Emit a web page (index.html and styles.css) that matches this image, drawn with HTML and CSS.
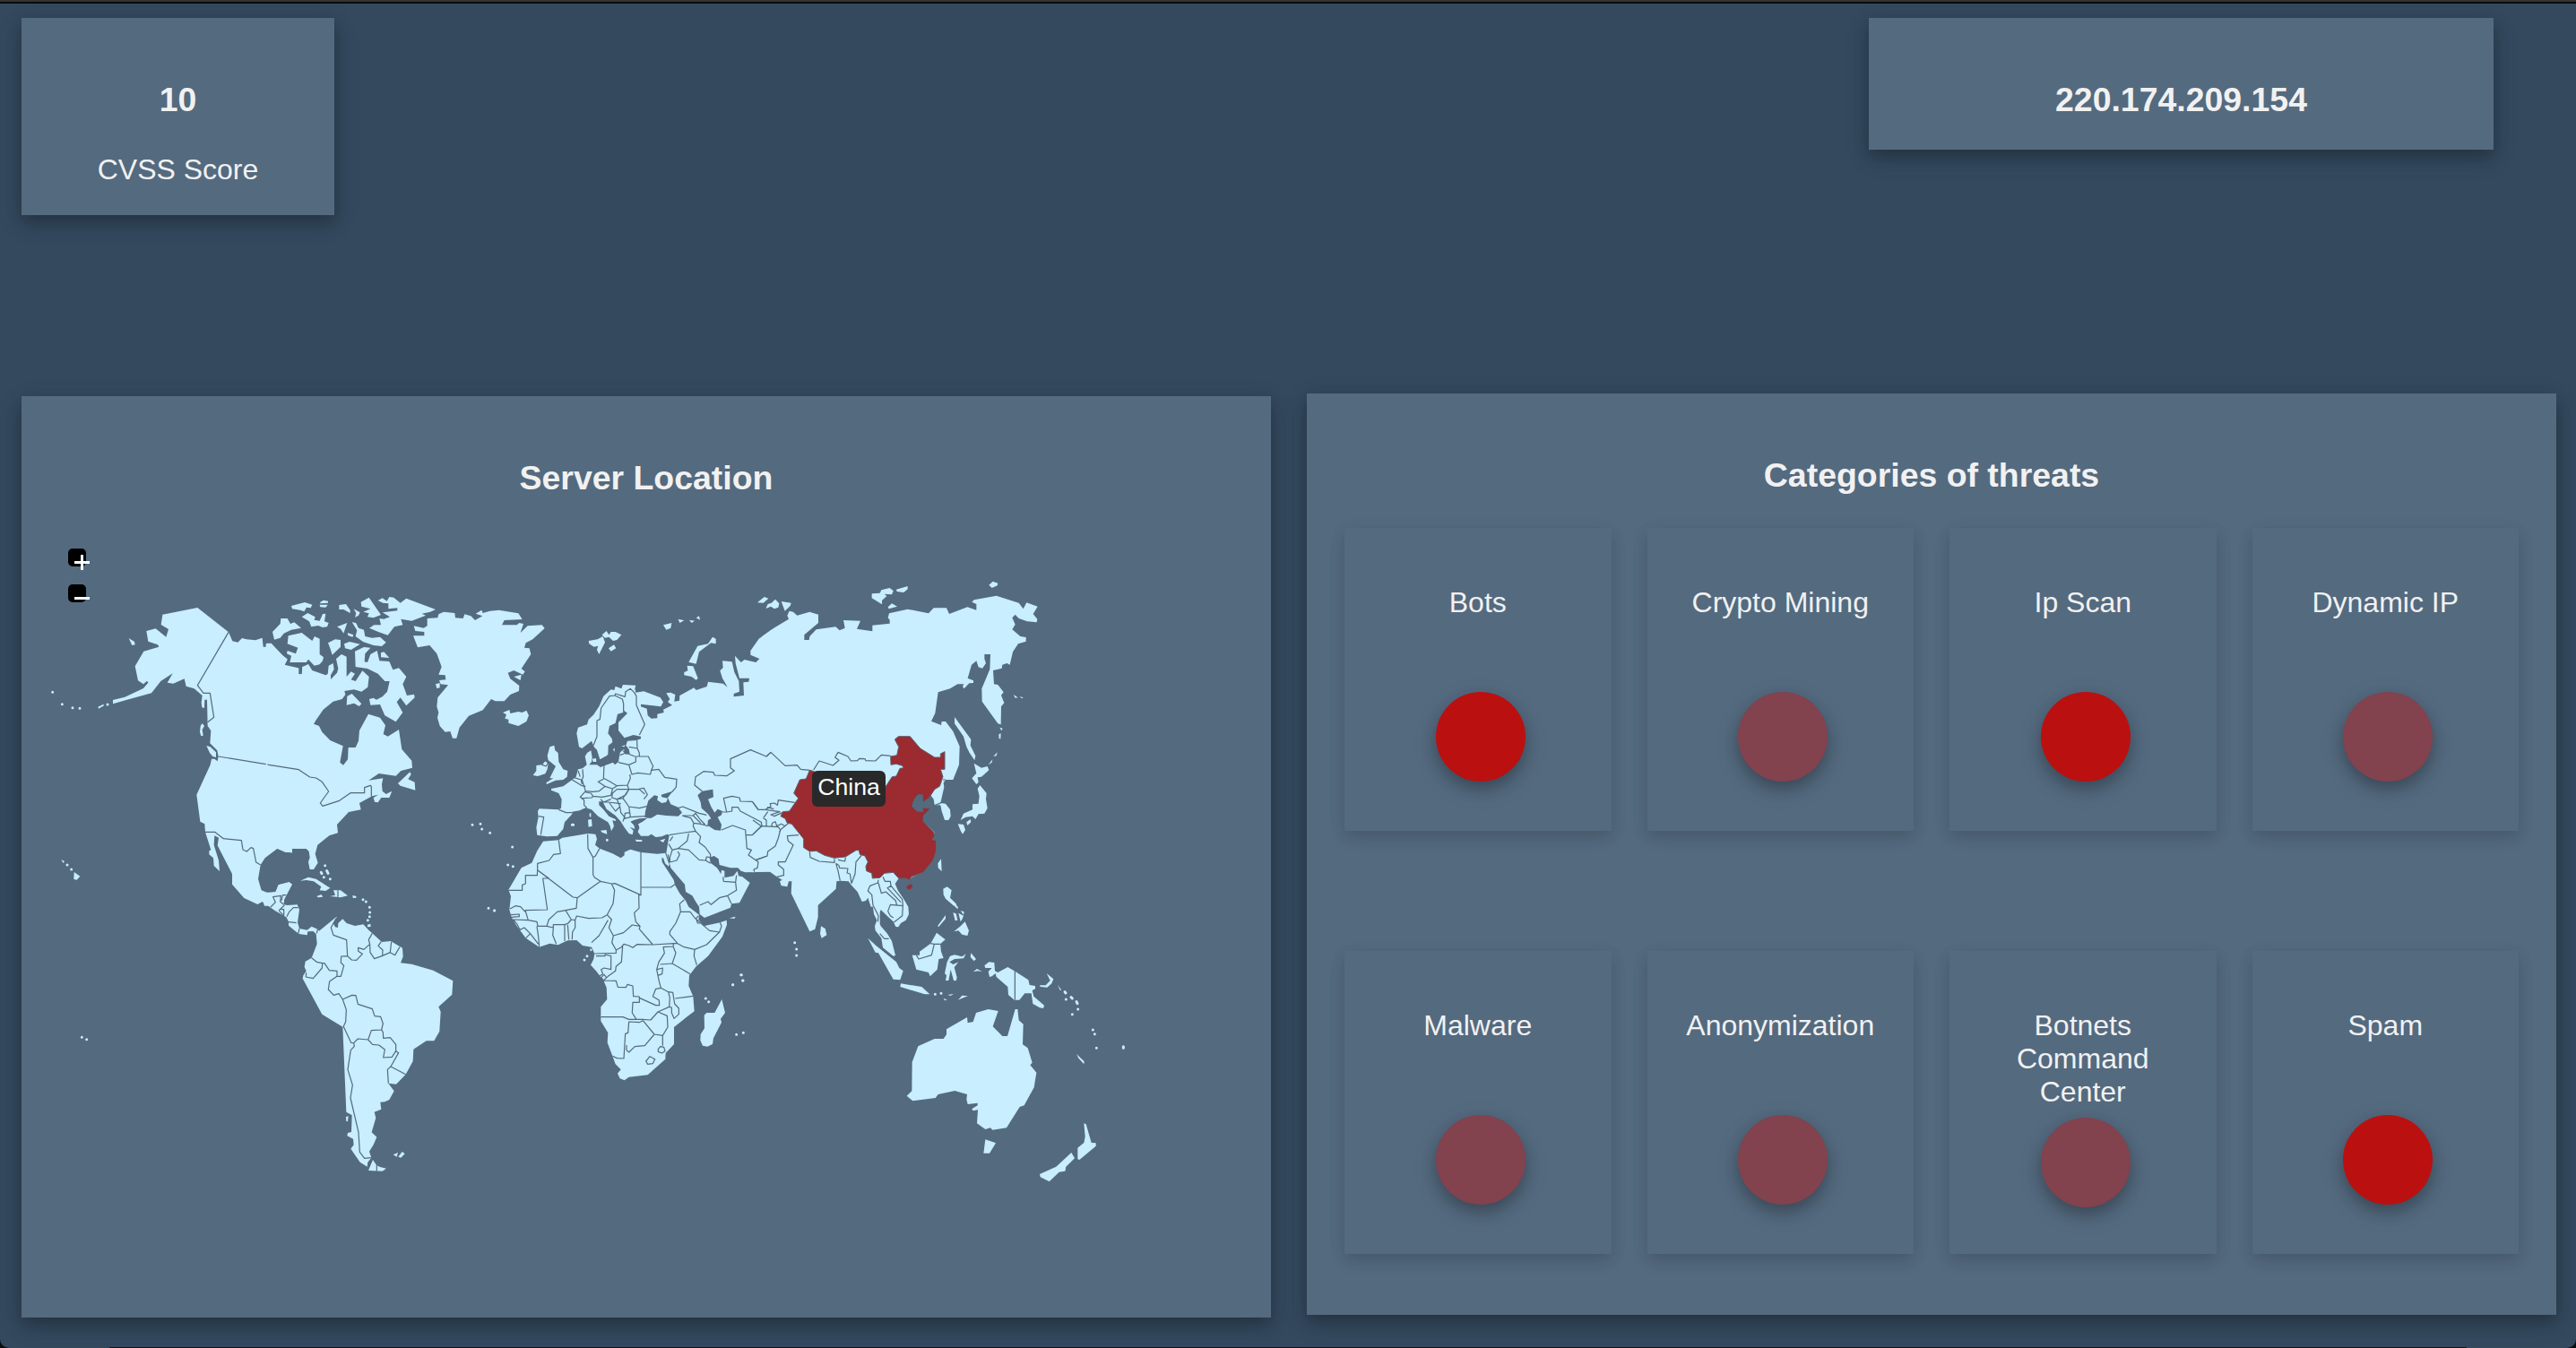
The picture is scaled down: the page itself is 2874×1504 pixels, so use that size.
FILE: index.html
```html
<!DOCTYPE html>
<html lang="en">
<head>
<meta charset="utf-8">
<title>Threat dashboard</title>
<link rel="stylesheet" href="styles.css">
</head>
<body>
<div class="page">
  <div class="window-edge"></div>
  <header class="summary">
    <section class="card score">
      <h3 class="card-title">10</h3>
      <p class="card-text">CVSS Score</p>
    </section>
    <section class="card address">
      <h3 class="card-title">220.174.209.154</h3>
    </section>
  </header>
  <main class="panels">
    <section class="card panel location">
      <h3 class="card-title">Server Location</h3>
      <div class="map">
        <svg class="world" viewBox="24 592 1394 800" width="1394" height="800">
          <!-- North America, west -->
          <g class="land" transform="translate(40 590) scale(.33333)">
            <path d="M541,264 645,346 658,376 676,380 690,366 705,370 735,373 758,365 761,395 773,395 774,383 788,383 822,422 842,436 832,458 880,467 880,487 892,487 892,462 900,460 910,500 910,1070 858,1070 858,1084 835,1082 808,1070 767,1102 752,1125 744,1172 755,1210 780,1220 804,1215 812,1192 848,1184 858,1190 832,1240 820,1262 765,1262 760,1247 742,1257 697,1236 657,1190 657,1155 608,1060 612,1034 598,1027 596,1058 612,1110 615,1146 596,1128 594,1102 580,1090 580,1078 586,1075 567,1015 565,988 550,980 538,890 584,790 588,770 598,770 608,778 611,762 607,742 583,718 586,676 575,660 573,572 565,572 564,600 556,598 554,582 557,558 530,535 503,527 497,502 460,518 440,515 458,484 418,510 387,550 300,574 258,586 258,573 298,563 360,534 376,515 372,509 360,520 342,508 332,460 361,410 412,395 408,388 376,377 370,342 401,334 436,362 444,336 419,321 424,287Z"/>
            <path d="M571,726 584,730 603,748 603,765 592,762 582,750ZM551,660 557,651 564,660 557,672 560,692 553,694 549,680ZM311,366 330,378 332,388 322,390ZM208,596 226,587 228,592 210,602ZM128,1149 148,1163 137,1175 127,1173ZM85,1107 96,1113 92,1119Z"/>
            <path class="dots" d="M56,547h0M88,587h0M123,599h0M147,601h0M240,588h0M105,1125h0M119,1140h0M154,1702h0M170,1709h0"/>
            <path class="border" d="M645,346 541,524 561,550 583,550 596,631 575,647M611,762 880,806 905,822M567,1015 599,1015 628,1037 688,1043 693,1074 706,1080 720,1067 728,1070 737,1116 752,1125"/>
          </g>
          <!-- North America, east, Arctic islands and Greenland -->
          <g class="land" transform="translate(300 640) scale(.33333)">
            <path d="M-10,234 8,234 45,272 62,288 52,305 98,316 98,337 110,337 112,313 132,303 145,324 190,340 197,336 200,308 215,300 218,320 207,340 207,354 228,332 232,318 225,285 243,270 260,278 260,345 275,328 288,335 275,355 290,360 313,325 335,345 331,380 310,395 285,388 253,393 256,405 245,420 215,428 182,455 158,490 150,503 168,510 178,530 205,558 248,577 238,632 249,641 264,622 266,582 290,582 300,560 303,525 333,470 372,482 390,508 383,537 398,545 435,522 445,588 478,626 480,650 442,660 425,677 368,669 334,692 382,685 378,705 380,728 392,738 412,728 403,750 376,750 365,766 354,764 350,750 366,740 345,745 303,768 308,790 267,798 228,840 231,868 202,877 163,908 155,938 164,968 150,990 137,990 132,965 137,950 134,930 125,921 78,921 78,934 55,932 28,920 0,940 -10,940Z"/>
            <path d="M40,150 62,150 72,168 85,163 108,182 75,188 50,200 38,215 18,221 12,195 38,168ZM65,208 110,198 145,225 153,210 170,218 170,270 183,280 180,292 170,304 152,308 132,287 125,297 70,297 75,275 60,268 62,258 90,268 97,248 62,235ZM75,108 120,96 145,104 140,115 126,113 118,127 105,122 78,118ZM172,95 183,89 198,92 198,98 172,100ZM170,104 197,104 190,113 172,112ZM110,145 130,132 155,145 152,155 170,158 180,135 190,134 186,160 200,165 195,178 180,180 165,174 142,178 135,160ZM235,105 258,102 272,122 272,132 250,120 235,120ZM284,118 305,130 300,140 288,146 292,133ZM308,95 335,80 375,138 350,148 330,145 335,133 316,128 340,118 310,110Z"/>
            <path d="M365,90 380,82 395,92 403,78 418,80 440,98 460,83 558,120 540,128 512,134 525,140 478,158 442,152 448,172 420,178 398,206 368,196 336,182 352,172 375,172 370,150 385,152 405,145 380,130 430,124 430,115 400,118 400,100 382,98ZM278,162 292,166 300,182 318,188 322,210 345,215 372,212 392,230 378,243 350,240 315,228 290,210 295,190ZM228,178 262,165 255,185 250,200 240,185ZM263,198 283,205 280,212 265,207ZM198,232 222,220 240,222 240,245 212,272 205,250ZM252,235 270,228 305,236 275,255 255,250Z"/>
            <path d="M288,260 318,246 340,248 322,268 320,295 330,297 340,270 362,258 370,292 403,294 415,322 435,316 460,345 448,370 462,408 486,404 488,415 460,442 440,415 428,430 448,465 425,496 388,475 372,438 340,440 336,420 350,416 360,422 380,412 396,395 404,360 388,360 365,335 330,318 290,312ZM375,265 385,262 403,282 375,280ZM262,410 278,402 310,436 302,444 285,434 260,440ZM432,702 472,664 476,672 466,688 488,698 490,725 440,710ZM558,370 572,366 572,382 562,384Z"/>
            <path d="M530,150 565,148 568,136 585,128 622,132 624,148 650,150 655,136 676,142 690,156 715,142 692,134 712,122 716,132 740,125 770,122 835,133 848,153 788,156 780,172 830,172 838,165 852,168 842,198 866,175 914,172 923,183 883,220 860,232 855,248 872,250 877,270 845,318 857,328 850,338 820,324 800,332 808,352 838,375 837,393 808,405 788,427 758,427 744,420 716,457 669,476 638,515 628,551 615,551 607,528 590,530 572,510 564,482 568,465 562,445 565,415 600,373 575,370 570,357 592,355 590,340 568,338 578,312 562,268 538,240 498,247 483,208 520,208 520,195 490,192 485,175 518,182 530,175ZM820,345 845,338 842,357ZM783,465 805,456 808,468 835,462 848,465 862,458 870,475 862,495 835,510 802,500 802,488 790,485 795,472Z"/>
            <path d="M105,1028 132,1016 158,1022 205,1052 190,1062 170,1060 175,1048 150,1030 125,1026ZM160,1080 175,1074 181,1082 165,1084ZM205,1080 222,1076 216,1060 240,1060 264,1078 240,1084 228,1082ZM280,1077 293,1080 291,1086 281,1085Z"/>
            <path class="dots" d="M188,977h0M175,1000l2,4M194,995l4,8M184,1016h0M205,1022h0M681,841h0M708,838h0M713,855h0M740,868h0M815,915h0M800,975h0M817,980h0M735,1120h0M755,1128h0"/>
            <path class="border" d="M-5,639 0,640 100,656 137,681 158,684 178,697 200,729 172,768 180,778 236,760 273,734 320,734 320,716 340,709 343,712 343,746M231,1060V1082"/>
          </g>
          <!-- Central and South America -->
          <g class="land" transform="translate(300 980) scale(.33333)">
            <path d="M-20,48 22,46 32,22 68,12 77,20 52,62 50,88 62,90 95,88 102,105 96,148 102,168 128,173 143,161 163,170 168,176 225,130 228,128 215,150 222,163 231,165 232,150 247,136 260,150 288,159 316,154 334,173 346,184 378,213 408,210 438,228 447,233 449,262 441,283 478,287 550,308 616,343 613,389 568,430 575,446 571,512 553,544 527,544 484,572 482,612 458,656 426,689 400,686 419,712 403,741 388,748 373,749 376,773 353,782 358,802 344,850 361,866 350,892 336,914 343,935 331,950 329,965 305,950 274,905 284,892 282,872 262,862 264,852 276,849 278,793 259,782 247,497 178,455 113,335 115,325 120,318 125,310 119,297 122,278 143,266 161,220 158,186 148,177 130,178 128,190 100,186 66,158 66,145 58,130 20,108 -5,90 -20,80Z"/>
            <path d="M348,942 360,960 372,966 393,971 380,980 333,978ZM258,798 266,796 264,814 259,813ZM416,925 432,918 428,932ZM433,932 446,915 455,922 442,935ZM330,155 340,152 341,162 330,163Z"/>
            <path class="dots" d="M315,71h0M325,78h0M337,97h0M338,114h0M337,128h0M331,140h0"/>
            <path class="border" d="M225,134 208,165 216,190 260,206 263,260 277,273 293,274 313,253 299,244 299,232 318,238 338,220M346,184 334,205 338,222 339,248 353,269 380,259 381,240 366,226 376,212M380,259 406,248 410,212M406,248 422,257 438,230M263,260 242,261 241,282 251,292 241,328 228,328 228,310 202,308 186,284 179,284 160,280 143,266M179,284 178,300 148,335 124,330 125,316M228,328 203,345 199,372 217,391 234,386 247,405 259,440 257,480 249,497M247,405 278,391 291,392 298,421 346,437 354,461 374,463 382,486 377,507 343,509 332,540 298,537 284,551 275,550 249,494M377,507 382,515 383,535 406,533 425,556 425,578 412,598 383,600 388,573 368,558 347,556 332,540M425,578 434,584 408,630 397,640 400,686M408,630 458,656M284,551 286,562 274,575 264,640 280,692 273,735 300,850 304,916 320,937 343,935M361,960V980M6,96 22,80 14,62 40,58 38,78 50,88M42,75 46,56 58,56M33,108 52,90M33,108 50,124V104L40,104M60,128 68,112 82,98 98,98M66,146 92,149M102,168 98,186M163,170 160,184"/>
          </g>
          <!-- Africa -->
          <g class="land" transform="translate(550 900) scale(.33333)">
            <path d="M168,116 220,112 232,104 318,90 343,92 348,108 342,128 357,140 400,157 428,172 440,163 440,152 460,143 495,153 550,158 578,155 592,185 588,200 576,190 570,172 565,172 566,185 590,222 605,245 609,262 625,290 645,315 655,335 690,362 688,378 705,400 760,388 782,380 783,395 768,435 720,500 680,535 657,565 655,600 670,635 674,685 650,703 606,738 606,795 578,825 577,845 518,898 455,905 440,916 425,910 417,893 428,880 410,862 400,835 383,790 385,757 361,718 361,670 382,645 380,605 370,582 345,550 327,530 337,510 340,492 330,470 300,465 280,447 250,448 218,463 190,458 155,470 110,440 80,400 62,370 55,345 60,300 52,278 95,205 130,188 148,148Z"/>
            <path d="M766,645 777,690 762,710 765,722 738,775 735,795 718,803 702,800 694,782 695,762 708,742 707,698 715,690 742,690ZM791,373 812,368 808,375ZM326,475 332,477 330,484 325,483Z"/>
            <path class="dots" d="M5,348h0M315,500h0M306,513h0M712,642h0M722,653h0M803,596h0M830,563h0M836,582h0M815,763h0M838,757h0"/>
            <path class="border" d="M220,112 226,157 203,160 188,180 149,190 149,212 268,303 282,305 360,250 340,237 335,228 335,170 318,140 317,92M335,170 343,165 357,140M149,212 148,230 109,230 109,258 98,262 98,280 52,280M149,212 187,240 167,240 182,345 108,347 118,380 67,378M57,342 75,332 92,335 108,352M60,362 88,360 88,368 60,370M282,305 279,340 243,347 215,352 187,378 180,400 150,400 147,385 118,380M243,347 262,378 275,380 280,366 320,374 365,372 382,362 402,325 407,280 397,258 360,250M397,258 408,257 495,296 495,153M497,270 595,270 609,260M495,296 488,295 489,340 473,355 478,385 492,400 490,410 535,462 605,458M492,400 466,396 437,422 403,432 388,405 397,378 382,362M385,380 355,432 330,455M403,432 398,455 412,480 430,470 438,460 455,465 468,472 482,461 535,462M180,400 202,405 200,430 212,460M202,405V395H240V450M240,395 252,390 262,378M250,395 254,445M265,445 266,420 275,405 275,380M147,400 152,435 155,470M80,392 90,412 105,405 125,425 152,460M125,425 110,440M67,378 80,392M340,492 412,490 412,480M345,500H375V495L395,500V545L372,540 362,545 368,560 355,568M434,466 430,520 412,535 410,550 385,568 370,582 362,572 372,562 380,572M370,582 412,583 418,604 445,605 450,595 468,600 470,635 490,636 490,655 468,655 466,690 480,712M490,640 545,665 557,665 556,648 535,635 545,610 562,607 587,620M605,458 603,468 570,470 574,490 555,520 548,545 555,580 562,607M603,468 612,490 600,525 560,528M550,545 568,540 566,560 552,565M600,525 660,560M605,458 618,458 640,470 675,478 673,500 682,530M675,478 715,462 758,420 725,415 690,385 675,372 660,352 628,352 612,390 592,418 592,428 618,458M628,352 625,325 640,312M688,365 680,375 685,390 695,390M758,420 765,400 760,388M610,642 670,634M587,620 602,622 608,660 622,675 622,695 606,709 598,690 598,672 590,670M587,620 592,640 590,670 552,687 528,714 500,712 455,712 435,704 361,704M552,687 583,700 585,738 568,766 540,762 502,716 490,722 455,720 452,757 443,760 438,843 415,842 400,835M540,762 508,800 475,803 455,822 447,815 447,798M568,766V800M553,812 560,803 572,805 576,818 565,825 553,820ZM512,852 525,836 542,845 535,860 518,862ZM578,155 590,190"/>
          </g>
          <!-- Europe, western Russia and the Middle East -->
          <g class="land" transform="translate(560 640) scale(.33333)">
            <path d="M905,186 860,218 832,258 832,272 862,285 850,297 812,288 800,297 780,275 782,300 795,350 828,350 826,362 808,364 810,408 776,412 776,402 795,395 793,360 778,330 770,295 738,292 740,315 730,325 738,350 755,380 740,368 690,362 686,378 650,390 643,382 595,408 594,425 577,428 580,405 565,398 550,400 562,420 555,430 570,440 540,455 542,465 520,470 520,484 500,485 488,475 485,452 465,445 465,437 532,445 540,430 530,415 475,394 448,398 445,385 448,374 405,372 400,385 380,377 376,390 365,388 340,410 325,445 306,473 290,488 285,505 255,515 250,535 258,580 268,585 300,560 308,580 318,590 328,622 350,610 355,605 356,575 370,565 368,552 355,535 360,510 380,500 387,470 405,465 408,458 420,467 390,498 390,525 410,550 440,540 465,545 465,553 450,558 420,560 415,575 425,588 428,602 415,605 402,592 395,600 390,630 378,640 372,632 345,642 330,648 318,640 292,640 300,630 302,615 298,592 285,600 278,612 284,640 270,652 255,655 248,680 235,690 205,712 165,720 165,725 190,735 200,755 198,785 190,790 125,787 120,795 122,815 115,850 118,875 150,880 185,878 205,855 210,832 235,805 235,797 260,793 280,784 300,790 322,812 355,832 362,845 366,862 375,845 370,826 382,828 380,822 358,812 340,790 325,775 325,762 338,765 350,788 380,810 398,830 410,850 425,870 437,874 440,860 428,848 445,855 442,842 430,830 442,825 460,820 487,818 470,830 455,838 460,850 455,865 465,878 490,878 500,872 515,882 535,880 553,872 560,875 555,905 550,935 560,965 565,985 590,1015 612,1040 615,1065 637,1078 650,1100 660,1115 662,1140 678,1152 765,1118 768,1105 795,1102 830,1035 805,1015 792,1012 788,995 775,1012 745,1018 745,995 735,992 733,1005 720,985 698,968 695,950 710,945 725,955 728,975 765,985 790,985 800,995 815,1000 865,998 905,998Z"/>
            <path d="M152,610 160,580 175,575 178,592 188,600 190,630 205,655 220,660 218,680 205,690 180,692 150,705 148,700 172,685 160,685 175,655 180,645 165,632 155,625ZM104,675 115,660 115,642 135,640 145,628 155,635 152,655 145,670 120,678ZM288,824 300,822 302,845 290,848ZM293,803 298,800 298,815 293,813ZM330,860 350,858 352,872 335,866ZM446,890 470,892 468,897 450,897ZM528,893 547,887 540,900ZM302,620 315,618 316,630 305,630ZM372,588 378,584 376,597ZM400,578 412,574 410,580ZM403,592 409,588 409,594Z"/>
            <path d="M290,225 320,220 338,210 345,230 325,270 318,255 322,242 308,245 292,235ZM335,205 350,192 358,205 365,195 380,195 400,205 385,222 372,225 358,212 345,215ZM357,250 375,238 382,250 365,260ZM540,172 568,165 565,182 550,188ZM590,152 610,157 595,165ZM627,155 645,158 635,165ZM650,148 660,142 663,155ZM705,212 716,218 716,235 700,232 660,262 650,302 625,296 655,242 690,235ZM620,308 640,310 656,350 650,356 635,345 610,340 610,330 622,325Z"/>
            <path class="dots" d="M235,841l4,0M352,892h0"/>
            <path class="sea" d="M478,815 480,795 490,760 510,742 522,745 520,758 535,768 550,765 555,752 535,748 533,740 572,728 555,750 565,772 590,782 603,800 590,812 550,810 520,806 500,818 488,818ZM655,742 670,728 706,722 708,748 690,755 700,780 712,800 722,788 738,795 735,808 722,815 735,840 732,860 712,858 688,842 690,825 700,820 690,805 668,785 665,765ZM440,828 458,826 484,820 470,830 456,838 460,855 448,848Z"/>
          </g>
          <!-- Northern and eastern Asia -->
          <g class="land" transform="translate(840 640) scale(.33333)">
            <path d="M30,211 70,182 120,152 115,140 122,125 135,128 148,140 190,128 219,137 219,165 172,205 172,222 188,222 190,210 212,187 277,178 290,190 308,182 303,156 360,158 348,185 400,193 400,173 458,167 458,155 452,148 456,133 518,119 588,133 605,115 648,115 657,135 718,112 748,122 748,102 733,95 740,88 815,74 890,98 905,118 916,97 953,110 938,135 952,152 950,163 918,160 890,150 878,137 868,148 878,170 868,187 895,210 914,213 914,227 888,235 870,262 860,305 850,300 835,305 833,317 804,324 807,370 820,372 839,397 831,407 841,433 831,445 830,505 820,502 767,428 766,385 793,320 795,270 775,270 775,285 780,300 768,317 755,313 748,292 732,305 719,350 738,358 738,366 724,367 707,385 702,378 706,370 685,370 660,385 620,397 610,467 597,494 630,507 632,495 645,495 670,528 692,578 690,640 670,690 645,690 638,700 640,715 632,750 628,768 645,770 660,790 662,812 655,825 642,825 632,795 628,775 608,775 605,755 595,742 608,722 590,700 500,700 500,990 30,995Z"/>
            <path d="M675,480 730,555 728,575 745,610 742,625 725,600 715,580 705,545 675,502ZM740,635 765,650 785,645 790,658 765,680 752,682 755,698 748,705 733,685 748,668ZM760,708 782,735 780,755 785,785 775,803 755,805 745,822 735,812 712,815 695,825 705,803 735,790 735,772 755,770 758,745 752,720ZM686,838 705,840 711,858 702,872 695,860ZM715,832 728,822 730,832 718,843ZM826,515 836,518 832,526ZM823,538 830,535 829,553 824,553ZM805,612 818,598 815,610ZM788,640 802,622 800,632ZM872,405 887,415 878,416ZM893,411 905,415 900,418ZM398,67 425,65 430,55 458,48 470,58 465,70 440,68 448,75 432,90 432,103 398,82ZM480,53 518,42 518,52 505,63 482,60ZM452,112 465,100 483,110 455,118ZM790,38 803,26 820,32 818,40 800,48ZM15,97 38,78 52,83 35,98ZM43,117 50,102 62,98 75,86 88,100 85,113 72,118 60,110ZM95,93 128,98 125,108 107,125ZM619,970 630,955 632,997 620,985Z"/>
          </g>
          <!-- South and south-east Asia -->
          <g class="land" transform="translate(800 820) scale(.33333)">
            <path d="M100,458V300H700L727,325 725,342 720,350 733,353 733,390 723,420 690,458 650,478 640,488 636,478 608,480 596,498 605,520 625,550 640,575 642,600 632,620 615,630 607,643 598,642 590,625 572,608 548,585 545,595 545,632 548,640 570,665 585,690 597,738 590,740 555,712 550,680 530,655 528,640 535,620 525,600 522,575 515,575 505,545 498,555 485,558 470,525 450,503 440,490 412,488 400,490 398,515 338,570 338,610 328,650 310,658 248,530 250,490 240,490 235,508 215,505 210,490 218,485 200,475 175,457 120,460Z"/>
            <path d="M757,515 770,508 785,520 780,545 800,565 805,580 790,570 765,548 758,535ZM738,640 765,603 765,615 742,642ZM790,595 800,598 805,620 797,622ZM808,596 825,605 820,618 815,625ZM815,588 827,592 825,602ZM793,658 815,640 830,625 843,655 838,672 820,668 808,655ZM797,576 806,573 806,583ZM348,640 362,648 367,670 350,680 345,665Z"/>
            <path class="dots" d="M260,695h0M266,717h0M266,738h0M82,803h0M87,822h0M53,836h0"/>
            <path class="border" d="M398,430 405,455 412,488M398,430 408,437 410,445 438,447 435,462 445,465 450,497M480,388 482,405 465,425 462,465 450,497M540,485 538,495 512,505 505,522 518,535 522,570 530,585 540,605 538,625M555,475 562,490 580,490 582,505 620,550 622,572 580,568 572,590 580,605 590,612M540,495 550,530 565,525 598,555 602,572M582,505 570,512 615,560M622,572 620,605 592,627M545,665 560,682 575,682"/>
          </g>
          <!-- Borders of Europe, the Middle East and Central Asia -->
          <g transform="translate(560 640) scale(.33333)">
            <path class="border" d="M306,575 318,545 318,492 328,488 332,450 360,410 378,408 380,402 412,412 414,395 430,385 443,398 450,410 450,440 478,505 460,540M378,408 403,420 407,435 407,462M452,558 453,585 460,600 460,612 490,612 506,645 500,658 497,672 455,667 435,672 425,640 448,630 448,612 460,612M425,580 453,585M395,608 415,600 445,612M390,632 425,640M342,640 340,685 360,695 385,710 420,708 430,685 428,672M500,658 525,655 545,682 585,688 583,715 568,732M420,708 425,722 460,722 478,738M460,720 475,718 487,740 475,755M270,655 272,680 268,690 280,728 305,730 325,728 345,712 322,697 340,688M235,690 268,710 280,712M280,728 262,748 275,758 275,775 285,785M262,748 270,752 300,750 305,745 298,735 280,732M305,745 335,748 365,742 370,720 345,712M370,720 385,710M370,735 385,722 425,722 415,740 385,755 368,750ZM425,722 405,752 425,780 460,785 488,778M425,780 430,815 480,812M385,755 405,752M385,755 395,780 398,800 410,815 405,830M330,765 355,765 398,770M360,768 380,795 395,780M330,755 340,765 365,755M412,802 428,800 430,815 410,820ZM190,790 215,800 235,800M122,812 140,815 130,874M240,682 265,690 268,705M255,660 262,680M135,628 145,625 155,632 148,645 135,640ZM560,875 590,870 648,862 640,845 642,835 632,818 603,810M648,862 665,880 660,900 680,915 698,940 698,950 685,948 682,960 698,970M625,870 620,895 590,920 570,925 558,905M590,920 625,925 660,958 682,960M570,925 562,950 562,966 585,960 595,940 588,930M562,895 572,880M556,940 560,965M590,785 605,780 660,802 685,808M603,810 640,810 665,835M640,810 648,802 665,825 680,840M642,835 665,838 690,845M740,1015 742,1030 782,1033 785,1010M782,1033 785,1060 755,1078 728,1085 700,1108 690,1098 662,1110M755,1078 768,1105M670,728 645,708 648,680 675,662 708,665 712,675 752,677 778,660 765,650 765,620 832,590 885,612 900,598M738,798 752,798 742,752 770,745 795,750 798,762 838,763 858,790M752,798 770,795 770,782 790,782 798,795 868,832 870,845 838,875 815,875M735,858 772,843 815,858 820,920 835,925 825,942 858,965 855,985 843,990 845,998M852,958 888,945"/>
          </g>
          <!-- Borders of Asia -->
          <g transform="translate(840 640) scale(.33333)">
            <path class="border" d="M45,612 60,598 108,643 148,641 160,655 190,658M203,657 222,627 268,642 288,625 275,615 285,598 318,612 328,627 350,626 356,619 375,620 378,626 410,627 430,607 461,610M0,765 18,790 42,790 60,780 58,770 72,768 82,775 85,758 140,766M42,790 90,797 60,807 72,812 98,800M35,818 50,797M35,818 45,825 45,845M0,825 28,845M62,845 65,835 75,830 80,845 95,838 108,845M28,845 85,848 92,858 85,885 75,912 50,930 48,945 10,958M118,836 95,855 88,865M0,873 28,845M153,875 115,878 118,895 135,908 108,965 85,965 85,975 103,990 103,1010 80,1015M190,932 192,950 222,963 273,967 273,955M285,958 308,963 310,950M605,777 632,766M636,690 645,690M45,790 50,782 70,788"/>
          </g>
          <!-- China -->
          <g class="active" transform="translate(840 640) scale(.33333)">
            <path d="M190,658 205,662 230,720 400,740 445,712 466,680 480,678 492,652 505,650 500,643 480,637 462,640 461,612 482,608 488,580 475,555 487,545 526,545 560,585 608,615 628,615 628,603 642,596 642,655 628,655 636,680 625,712 608,722 590,750 570,765 568,740 552,740 540,755 532,778 548,795 570,797 568,785 590,785 588,793 570,810 570,830 605,865 607,880 600,890 613,893 613,930 603,960 570,1000 530,1015 522,1028 515,1020 488,1020 470,1000 440,1003 425,1018 400,1020 398,1003 380,995 378,980 385,965 375,945 358,940 355,926 345,926 310,948 272,952 240,943 212,928 190,930 170,917 170,888 130,838 115,835 108,820 93,812 100,797 122,795 152,752 137,735 157,690 178,687ZM515,1045 530,1038 535,1048 525,1058 515,1055Z"/>
          </g>
          <!-- Indonesia and Oceania -->
          <g class="land" transform="translate(940 1020) scale(.33333)">
            <path d="M85,80 112,105 180,160 190,180 203,190 193,220 170,218 120,130 110,128ZM195,232 265,243 292,268 275,268 193,243ZM233,137 258,137 258,125 295,98 315,62 344,85 327,100 330,125 338,147 322,150 317,185 293,208 288,195 247,185ZM342,198 350,160 360,140 375,136 400,142 413,133 405,148 375,150 358,160 370,168 388,160 374,178 383,212 380,223 372,222 362,185 355,222 345,222 348,205ZM430,130 447,150 440,157 428,143ZM437,193 450,183 467,192 452,190ZM475,172 490,160 508,162 510,190 520,195 553,177 575,190 622,220 626,237 645,240 645,250 635,255 640,275 675,305 672,315 660,313 637,300 632,265 610,265 592,287 575,287 555,270 553,243 515,210 512,198 500,208 492,210 488,192 500,180 478,180ZM660,238 680,238 695,222 683,198 706,217 700,232 685,245 662,243ZM720,236 733,254 728,254ZM387,287 400,272 420,274 404,280ZM352,270 372,267 362,273ZM338,281 350,287 342,289Z"/>
            <path d="M447,330 488,318 521,324 503,376 535,408 552,408 578,318 586,318 590,355 605,368 603,436 620,448 635,497 628,505 649,530 641,580 608,640 593,645 549,715 502,722 495,715 478,720 450,700 453,655 437,658 433,652 452,640 452,632 419,636 415,620 417,603 376,591 320,603 311,615 235,625 215,608 232,592 233,495 253,442 308,417 338,417 348,403 348,385 417,345 419,364 437,360ZM478,754 513,766 492,800 472,800ZM808,700 815,703 833,765 848,766 848,776 793,822 787,820 787,782 808,765 812,745ZM766,798 777,817 748,845 745,860 725,863 692,895 662,880 660,870 715,845ZM783,468 809,493 808,502 790,482Z"/>
            <path class="dots" d="M310,268h0M330,265h0M744,260l3,4M765,278l4,4M783,293l3,6M788,318h0M769,335h0M748,285h0M838,387h0M844,401h0M850,448h0M940,443v5"/>
            <path class="border" d="M247,137 255,150 298,137 307,100 327,100M295,98 307,100M577,190V287"/>
          </g>
        </svg>
        <div class="zoom-in"><i class="bar"></i><i class="bar upright"></i></div>
        <div class="zoom-out"><i class="bar"></i></div>
        <div class="tip">China</div>
      </div>
    </section>
    <section class="card panel threats">
      <h3 class="card-title">Categories of threats</h3>
      <div class="grid">
        <div class="threat"><p class="label">Bots</p><span class="lamp on"></span></div>
        <div class="threat"><p class="label">Crypto Mining</p><span class="lamp"></span></div>
        <div class="threat"><p class="label">Ip Scan</p><span class="lamp on"></span></div>
        <div class="threat"><p class="label">Dynamic IP</p><span class="lamp"></span></div>
        <div class="threat"><p class="label">Malware</p><span class="lamp"></span></div>
        <div class="threat"><p class="label">Anonymization</p><span class="lamp"></span></div>
        <div class="threat"><p class="label">Botnets Command Center</p><span class="lamp"></span></div>
        <div class="threat"><p class="label">Spam</p><span class="lamp on"></span></div>
      </div>
    </section>
  </main>
  <footer class="dock-edge"></footer>
</div>
</body>
</html>
```
FILE: styles.css
```css
* { box-sizing: border-box; }

body {
  margin: 0;
  background: #0c0c0c;
  color: #f1f1f1;
  font: 32px/37px "Liberation Sans", Arial, sans-serif;
}

.page {
  display: flex;
  flex-direction: column;
  height: 1504px;
  overflow: hidden;
  background: #34495e;
  border-radius: 0 0 10px 10px;
}

.window-edge {
  height: 4px;
  flex: none;
  background: #0b0b0b;
  border-top: 2px solid #333;
}

.summary {
  display: flex;
  justify-content: space-between;
  align-items: flex-start;
  height: 435px;
  padding: 16px 92px 0 24px;
}

.card,
.lamp {
  box-shadow: 0 8px 16px rgba(0, 0, 0, .22), 0 8px 28px rgba(0, 0, 0, .13);
}

.card {
  background: #546a7f;
  text-align: center;
}

.score { width: 349px; height: 220px; }
.address { width: 697px; height: 147px; }

.card-title {
  margin: 0;
  padding-top: 70px;
  font-size: 37.44px;
  line-height: 43px;
}

.card-text { margin: 38px 0 0; }

.panels {
  display: flex;
  align-items: flex-start;
  gap: 40px;
  padding: 0 22px 0 24px;
  flex: 1;
}

.panel {
  flex: 1;
  height: 1028px;
}

.location { margin-top: 3px; }

.map {
  position: relative;
  margin-top: 37px;
  height: 800px;
}

.world { display: block; }
.land { fill: #c8eeff; }
.sea { fill: #546a7f; }

.border {
  fill: none;
  stroke: #546a7a;
  stroke-width: 3.6;
  stroke-linejoin: round;
}

.dots {
  fill: none;
  stroke: #c8eeff;
  stroke-width: 9;
  stroke-linecap: round;
}

.active {
  fill: #9b2a31;
  stroke: #5b6069;
  stroke-width: 3;
}

.zoom-in,
.zoom-out {
  position: absolute;
  left: 52px;
  width: 20px;
  height: 20px;
  border-radius: 5px;
  background: #000;
}

.zoom-in { top: 20px; }
.zoom-out { top: 60px; }

.bar {
  position: absolute;
  left: 7px;
  top: 14px;
  width: 17px;
  height: 3px;
  background: #fff;
}

.upright { transform: rotate(90deg); }

.tip {
  position: absolute;
  left: 882px;
  top: 268px;
  width: 82px;
  height: 40px;
  border-radius: 6px;
  background: #292929;
  color: #fff;
  font-size: 26.67px;
  line-height: 36px;
}

.grid {
  display: grid;
  grid-template-columns: repeat(4, 1fr);
  gap: 134px 40px;
  margin-top: 37px;
  padding: 0 42px;
}

.threat {
  display: flex;
  flex-direction: column;
  align-items: center;
  gap: 10px;
  height: 338px;
  padding: 65px 32px 0;
  background: #546a7f;
  box-shadow: 0 8px 16px rgba(0, 0, 0, .13), 0 4px 24px rgba(0, 0, 0, .04);
}

.label {
  margin: 0;
  min-height: 108px;
}

.lamp {
  width: 100px;
  height: 100px;
  flex: none;
  margin-left: 6px;
  border-radius: 50%;
  background: #82424e;
}

.lamp.on { background: #bb1010; }

.dock-edge {
  height: 1px;
  flex: none;
  margin: 0 122px;
  background: #111;
}
```
